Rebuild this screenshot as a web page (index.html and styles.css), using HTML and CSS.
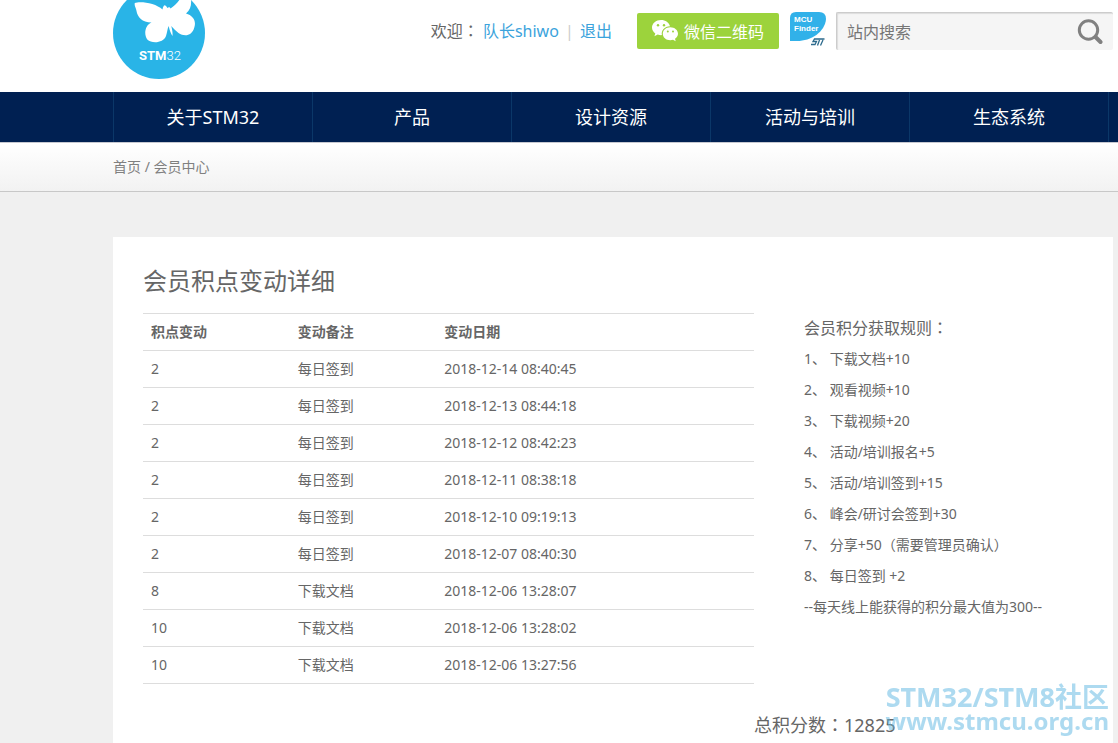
FILE: index.html
```html
<!DOCTYPE html>
<html lang="zh-CN">
<head>
    <meta charset="UTF-8">
    <meta name="viewport" content="width=device-width, initial-scale=1.0">
    <title>会员积点变动详细</title>
    <link rel="stylesheet" href="styles.css">
</head>
<body>

    <header class="header">
        <a class="logo" href="#" aria-label="STM32">
            <svg width="92" height="79" viewBox="113 0 92 79">
                <circle cx="159" cy="33" r="46" fill="#29b4e7"/>
                <path fill="#fff" d="M134.800 3C140 .8 156 3 162.500 9.500C163 7 163.500 6 164.600 5.300C165.500 5.300 166.500 6.200 167.300 8C168.500 6.800 170 7 170.500 8.500C174 6 177.500 3 180-1H191C191.600 5 190.500 10 186 13.500C193 15.500 196.500 21 194.300 27.500C192 36 184.500 37 178.500 33C176 31 173.500 28.500 171.200 26C172.300 29.500 172.800 33 172.500 36C170.800 33.500 169.500 30 168.700 26C167.300 29 167.300 32 166 36C163.500 43 152 44 147.300 39.500C143.500 34.500 145 25 151.500 22.500C142 22.500 137.500 17 136.500 11C136.200 8 134 6 134.800 3Z"/>
                <text class="logo-text" x="139" y="60">STM<tspan class="logo-num">32</tspan></text>
            </svg>
        </a>
        <div class="header-tools">
            <p class="welcome">欢迎<span lang="zh-TW">：</span> <a href="#">队长shiwo</a> <span class="sep">|</span> <a href="#">退出</a></p>
            <button class="wechat" type="button">
                <svg width="26" height="22" viewBox="0 0 26 22">
                    <path fill="#fff" d="M9 0C4 0 0 3.400 0 7.600C0 10 1.300 12 3.300 13.400L2.400 16.300L5.700 14.600C7 15 8.500 15.200 9.900 15.100C9 10.500 12.600 6.500 18 6.300C17.200 2.600 13.500 0 9 0Z"/>
                    <path fill="#fff" d="M18.300 7.200C14 7.200 10.800 10.100 10.800 13.700C10.800 17.300 14 20.200 18.300 20.200C19.200 20.200 20.200 20 21 19.700L23.700 21.200L23 18.700C24.800 17.500 26 15.700 26 13.700C26 10.100 22.600 7.200 18.300 7.200Z"/>
                    <g fill="#9cd33c">
                        <circle cx="6" cy="5.200" r="1.200"/>
                        <circle cx="12" cy="5.200" r="1.200"/>
                        <circle cx="15.800" cy="11.600" r="1"/>
                        <circle cx="21" cy="11.600" r="1"/>
                    </g>
                </svg>
                微信二维码
            </button>
            <a class="finder" href="#" aria-label="MCU Finder">
                <svg width="36" height="38" viewBox="0 0 36 38">
                    <path fill="#31b1e9" d="M0 6Q0 0 6 0H29Q36 0 36 7C35 20 21 29 7 29H0Z"/>
                    <text class="finder-text" x="4" y="10">MCU</text>
                    <text class="finder-text" x="4" y="19">Finder</text>
                    <path fill="none" stroke="#2c6a8c" stroke-width="1.300" d="M34.500 27H24.500L23 29.500H26.500L25 32.500H21M29.500 28L27.500 33.500M33 28L30.500 33.500"/>
                </svg>
            </a>
            <form class="search">
                <input type="text" placeholder="站内搜索" aria-label="站内搜索">
                <button type="submit" aria-label="搜索">
                    <svg width="26" height="26" viewBox="0 0 26 26" fill="none" stroke="#808080">
                        <circle cx="11.500" cy="11" r="9.200" stroke-width="3"/>
                        <path d="M18.500 18L23.500 23" stroke-width="4" stroke-linecap="round"/>
                    </svg>
                </button>
            </form>
        </div>
    </header>

    <nav class="nav">
        <ul>
            <li><a href="#">关于STM32</a></li>
            <li><a href="#">产品</a></li>
            <li><a href="#">设计资源</a></li>
            <li><a href="#">活动与培训</a></li>
            <li><a href="#">生态系统</a></li>
        </ul>
    </nav>

    <div class="breadcrumb"><a href="#">首页</a> / <a href="#">会员中心</a></div>

    <main class="main">
        <div class="card">
            <h1>会员积点变动详细</h1>
            <div class="content">
                <table class="points">
                    <thead>
                        <tr><th>积点变动</th><th>变动备注</th><th class="date">变动日期</th></tr>
                    </thead>
                    <tbody>
                        <tr><td>2</td><td>每日签到</td><td>2018-12-14 08:40:45</td></tr>
                        <tr><td>2</td><td>每日签到</td><td>2018-12-13 08:44:18</td></tr>
                        <tr><td>2</td><td>每日签到</td><td>2018-12-12 08:42:23</td></tr>
                        <tr><td>2</td><td>每日签到</td><td>2018-12-11 08:38:18</td></tr>
                        <tr><td>2</td><td>每日签到</td><td>2018-12-10 09:19:13</td></tr>
                        <tr><td>2</td><td>每日签到</td><td>2018-12-07 08:40:30</td></tr>
                        <tr><td>8</td><td>下载文档</td><td>2018-12-06 13:28:07</td></tr>
                        <tr><td>10</td><td>下载文档</td><td>2018-12-06 13:28:02</td></tr>
                        <tr><td>10</td><td>下载文档</td><td>2018-12-06 13:27:56</td></tr>
                    </tbody>
                </table>
                <section class="rules">
                    <h2>会员积分获取规则<span lang="zh-TW">：</span></h2>
                    <ol>
                        <li>1、 下载文档+10</li>
                        <li>2、 观看视频+10</li>
                        <li>3、 下载视频+20</li>
                        <li>4、 活动/培训报名+5</li>
                        <li>5、 活动/培训签到+15</li>
                        <li>6、 峰会/研讨会签到+30</li>
                        <li>7、 分享+50（需要管理员确认）</li>
                        <li>8、 每日签到 +2</li>
                    </ol>
                    <p>--每天线上能获得的积分最大值为300--</p>
                </section>
                <p class="total">总积分数<span lang="zh-TW">：</span>12825</p>
            </div>
        </div>
    </main>

    <div class="watermark">
        <div class="mark-name">STM32/STM8社区</div>
        <div class="mark-url">www.stmcu.org.cn</div>
    </div>

</body>
</html>
```
FILE: styles.css
```css
* {
    box-sizing: border-box;
}
body {
    margin: 0;
    min-height: 100vh;
    display: flex;
    flex-direction: column;
    background: #f0f0f0;
    color: #666;
    font-family: "Noto Sans", "Noto Sans CJK SC", sans-serif;
    font-size: 14px;
}
h1, h2, p, ul, ol {
    margin: 0;
    padding: 0;
    font-weight: normal;
    list-style: none;
}
a {
    color: inherit;
    text-decoration: none;
}
svg {
    display: block;
}
button, input {
    font-family: inherit;
    font-size: 16px;
    border: none;
}
/* colon sits in the middle of its box */
[lang="zh-TW"] {
    font-family: "Noto Sans CJK TC", sans-serif;
    line-height: 1;
}

/* header */
.header {
    display: flex;
    justify-content: space-between;
    align-items: flex-start;
    height: 92px;
    padding: 0 5px 0 113px;
    background: #fff;
}
.logo-text {
    font-family: Roboto, sans-serif;
    font-size: 13px;
    font-weight: bold;
    fill: #fff;
}
.logo-num {
    font-weight: 300;
}
.header-tools {
    display: flex;
    align-items: center;
    gap: 10px;
    padding-top: 12px;
}
.welcome {
    margin-right: 15px;
    font-size: 16px;
    line-height: 38px;
    white-space: nowrap;
}
.welcome a {
    color: #3ba3dc;
}
.sep {
    margin: 0 2px;
    color: #ccc;
}
.wechat {
    display: flex;
    align-items: center;
    justify-content: center;
    gap: 6px;
    width: 142px;
    height: 36px;
    margin-right: 1px;
    padding: 0;
    border-radius: 2px;
    background: #9cd33c;
    color: #fff;
    white-space: nowrap;
    cursor: pointer;
}
.finder-text {
    font-family: "Liberation Sans", sans-serif;
    font-size: 8px;
    font-weight: bold;
    fill: #fff;
}
.search {
    display: flex;
    align-items: center;
    width: 277px;
    height: 38px;
    border-top: 1px solid #ccc;
    border-left: 1px solid #ccc;
    border-radius: 2px;
    background: #f5f5f5;
    box-shadow: inset 1px 1px 1px #ddd;
}
.search input {
    flex: 1;
    min-width: 0;
    padding: 0 10px;
    background: none;
    color: #666;
}
.search input::placeholder {
    color: #757575;
}
.search button {
    padding: 0 10px;
    background: none;
    cursor: pointer;
}

/* navigation */
.nav {
    padding: 0 9px 0 113px;
    background: #002052;
}
.nav ul {
    display: grid;
    grid-template-columns: repeat(5, 1fr);
    border-left: 1px solid #0b3768;
}
.nav a {
    display: block;
    border-right: 1px solid #0b3768;
    color: #fff;
    font-size: 18px;
    line-height: 50px;
    text-align: center;
}
.breadcrumb {
    padding-left: 113px;
    border-top: 1px solid #c6c8d0;
    border-bottom: 1px solid #c8c8c8;
    background: linear-gradient(#fff, #f2f2f2);
    color: #808080;
    line-height: 48px;
}

/* content */
.main {
    flex: 1;
    display: flex;
    padding: 45px 5px 0 113px;
}
.card {
    flex: 1;
    padding: 24px 30px 0;
    background: #fff;
}
.card h1 {
    margin-bottom: 12px;
    font-size: 24px;
    line-height: 40px;
}
.content {
    display: grid;
    grid-template-columns: 65% 35%;
    align-items: start;
}
.points {
    width: 100%;
    border-collapse: collapse;
    table-layout: fixed;
    line-height: 20px;
}
.points th, .points td {
    padding: 8px;
    border-top: 1px solid #ddd;
    border-bottom: 1px solid #ddd;
    text-align: left;
}
.points .date {
    width: 52%;
}
.rules {
    padding-left: 50px;
    line-height: 31px;
}
.rules h2 {
    font-size: 16px;
    line-height: 30px;
}
.total {
    grid-column: 2;
    margin-top: 25px;
    font-size: 18px;
    line-height: 32px;
}

/* site mark over the bottom corner */
.watermark {
    position: fixed;
    right: 9px;
    bottom: 10px;
    color: rgba(92, 182, 226, 0.5);
    font-weight: bold;
    line-height: 24px;
    text-align: right;
    pointer-events: none;
}
.mark-name {
    font-size: 27px;
}
.mark-url {
    font-size: 24px;
}
```
